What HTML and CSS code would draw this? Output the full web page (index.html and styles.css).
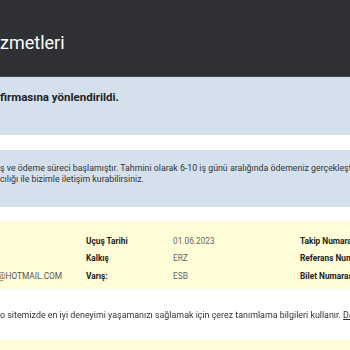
FILE: index.html
```html
<!DOCTYPE html>
<html>
<head>
  <title>Hizmetleri</title>
  <link rel="stylesheet" href="styles.css">
</head>
<body>
  <header class="topbar">
    <h1 class="topbar-title">zmetleri</h1>
  </header>

  <div class="notice notice-main">
    <p>firmasına yönlendirildi.</p>
  </div>

  <div class="notice notice-info">
    <p>ş ve ödeme süreci başlamıştır. Tahmini olarak 6-10 iş günü aralığında ödemeniz gerçekleşti</p>
    <p>cılığı ile bizimle iletişim kurabilirsiniz.</p>
  </div>

  <section class="details">
    <div class="details-grid">
      <span class="cell"></span>
      <span class="label">Uçuş Tarihi</span>
      <span class="value">01.06.2023</span>
      <span class="label">Takip Numara</span>

      <span class="cell"></span>
      <span class="label">Kalkış</span>
      <span class="value">ERZ</span>
      <span class="label">Referans Num</span>

      <span class="cell mail">@HOTMAIL.COM</span>
      <span class="label">Varış:</span>
      <span class="value">ESB</span>
      <span class="label">Bilet Numaras</span>
    </div>
  </section>

  <div class="cookie-bar">
    <p>o sitemizde en iyi deneyimi yaşamanızı sağlamak için çerez tanımlama bilgileri kullanır. <a href="#">Dah</a></p>
  </div>
</body>
</html>
```

FILE: styles.css
```css
body {
  margin: 0;
  font-family: 'Roboto', 'Liberation Sans', sans-serif;
  color: #222;
  background: #fff;
  overflow: hidden;
  white-space: nowrap;
}
.topbar {
  background: #2f3034;
  height: 77px;
  border-bottom: 1px solid #47484c;
  box-sizing: border-box;
  padding-top: 31px;
}
.topbar-title {
  margin: 0;
  font-size: 18px;
  font-weight: 400;
  line-height: 24px;
  color: #fff;
}
.notice {
  background: #d4e0ec;
}
.notice p {
  margin: 0;
}
.notice-main {
  height: 58px;
  box-sizing: border-box;
  padding-top: 12px;
  margin-bottom: 15px;
}
.notice-main p {
  font-size: 11.5px;
  font-weight: 700;
  line-height: 16px;
  color: #1f2328;
}
.notice-info {
  height: 57px;
  box-sizing: border-box;
  padding-top: 13px;
  margin-bottom: 14px;
}
.notice-info p {
  font-size: 8.8px;
  line-height: 11px;
  color: #333;
}
.details {
  background: #fefdd7;
  padding-top: 11px;
  height: 200px;
}
.details-grid {
  display: grid;
  grid-template-columns: 86px 87px 127px 1fr;
  grid-auto-rows: 17.5px;
  align-items: center;
  font-size: 8.3px;
}
.label {
  font-weight: 700;
  color: #222;
  overflow: hidden;
}
.value {
  color: #666;
}
.mail {
  justify-self: end;
  margin-right: 24px;
  color: #555;
}
.cookie-bar {
  position: fixed;
  left: 0;
  right: 0;
  bottom: 10px;
  height: 51px;
  background: rgba(255, 255, 255, 0.94);
  display: flex;
  align-items: center;
}
.cookie-bar p {
  margin: 0;
  font-size: 8.9px;
  color: #333;
}
.cookie-bar a {
  color: #333;
}
```
